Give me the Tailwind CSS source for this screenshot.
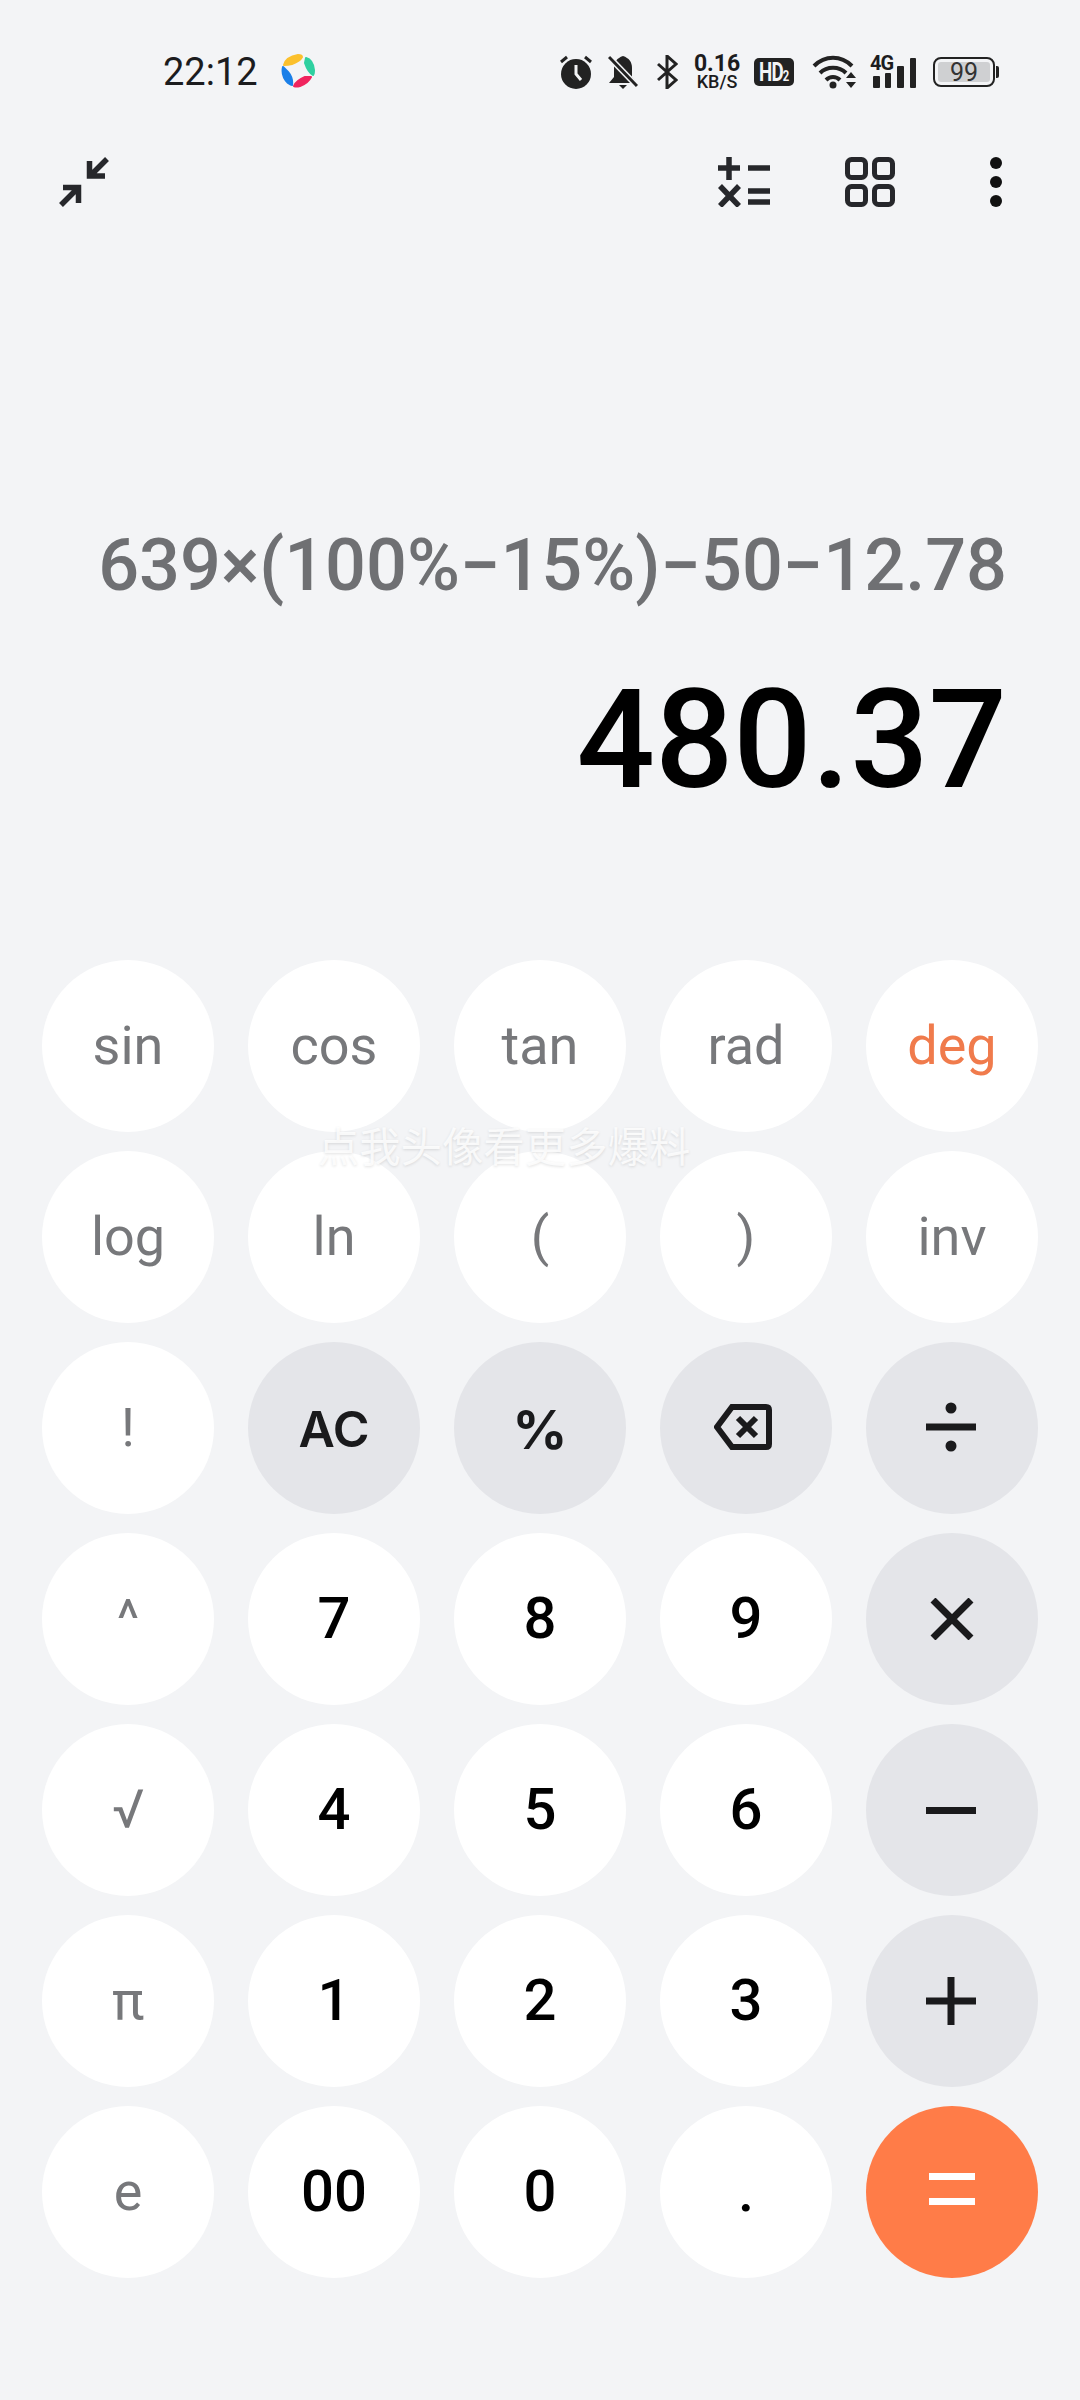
<!DOCTYPE html>
<html lang="en">
<head>
  <meta charset="UTF-8" />
  <title>Calculator</title>
  <script src="https://cdn.jsdelivr.net/npm/@tailwindcss/browser@4"></script>
</head>
<body class="bg-[#f3f4f6] font-['Roboto',sans-serif]">
<div class="relative w-[1080px] h-[2400px] overflow-hidden flex flex-col">

  <!-- status bar -->
  <div class="h-[144px] flex items-center pl-[163px] text-[#1c1c1e]">
    <span class="text-[38px] leading-none w-[117px]">22:12</span>
    <svg class="w-[36px] h-[36px]" viewBox="0 0 36 36" stroke-width="2" stroke-linejoin="round">
      <path d="M4 11Q6 3 18 1Q22 1 22 3Q20 7 12 10Q8 11 4 11Z" fill="#fbc02d" stroke="#fbc02d"/>
      <path d="M26 4Q33 6 34 16Q34 20 33 21Q28 18 25 9Z" fill="#2fd0a0" stroke="#2fd0a0"/>
      <path d="M31 23Q28 29 20 32Q16 33 14 32Q16 27 25 23Z" fill="#f0245e" stroke="#f0245e"/>
      <path d="M3 13Q1 22 8 29Q11 31 12 31Q13 24 8 18Z" fill="#1a7fe8" stroke="#1a7fe8"/>
    </svg>
    <svg class="ml-[244px] w-[32px] h-[34px]" viewBox="0 0 32 34">
      <circle cx="16" cy="19" r="15" fill="#222"/>
      <path d="M16 10V19L21 25" stroke="#f3f4f6" stroke-width="3" fill="none"/>
      <path d="M1 7L7 2M31 7L25 2" stroke="#222" stroke-width="3"/>
    </svg>
    <svg class="ml-[16px] w-[30px] h-[34px]" viewBox="0 0 30 34">
      <path d="M15 1C21 3 24 7 24 13V22L29 28H1L6 22V13C6 7 9 3 15 1Z" fill="#222"/>
      <path d="M11 30H19L15 34Z" fill="#222"/>
      <path d="M2 3L29 31" stroke="#f3f4f6" stroke-width="6"/>
      <path d="M1 2L29 31" stroke="#222" stroke-width="3"/>
    </svg>
    <svg class="ml-[19px] w-[21px] h-[34px]" viewBox="0 0 21 34" fill="none" stroke="#222" stroke-width="3">
      <path d="M1 9L19 25L10 33V1L19 9L1 25"/>
    </svg>
    <div class="ml-[17px] w-[44px] flex flex-col items-center font-medium leading-none">
      <span class="text-[23px] leading-[20px] font-bold">0.16</span>
      <span class="text-[18px] leading-[16px] whitespace-nowrap">KB/S</span>
    </div>
    <div class="ml-[15px] w-[40px] h-[28px] rounded-[5px] bg-[#222] text-[#f3f4f6] flex items-center justify-center leading-none overflow-hidden">
      <span class="scale-x-75 font-bold text-[25px] tracking-[-1px] whitespace-nowrap">HD<span class="text-[15px]">2</span></span>
    </div>
    <svg class="ml-[18px] w-[45px] h-[34px]" viewBox="0 0 45 34" fill="none" stroke="#222" stroke-width="4">
      <path d="M2 11C13 0 29 0 40 11"/>
      <path d="M8 18C15 11 27 11 34 18"/>
      <path d="M14 25C18 21 24 21 28 25"/>
      <circle cx="21" cy="30" r="3.5" fill="#222" stroke="none"/>
      <path d="M34 23L39 17L44 23ZM34 27L39 33L44 27Z" fill="#222" stroke="none"/>
    </svg>
    <div class="relative ml-[16px] w-[43px] h-[32px] flex items-end gap-[5px]">
      <div class="w-[7px] h-[12px] bg-[#222] rounded-[1px]"></div>
      <div class="w-[7px] h-[15px] bg-[#222] rounded-[1px]"></div>
      <div class="w-[7px] h-[22px] bg-[#222] rounded-[1px] ml-[1px]"></div>
      <div class="w-[7px] h-[30px] bg-[#222] rounded-[1px] ml-[1px]"></div>
      <span class="absolute left-[-3px] top-[-3px] text-[20px] leading-none font-bold tracking-[-1px]">4G</span>
    </div>
    <div class="ml-[17px] w-[62px] h-[30px] rounded-[8px] border-[2.5px] border-[#222] p-[3px] flex">
      <div class="flex-1 bg-[#cfd0d2] rounded-[3px] flex items-center justify-center text-[25px] leading-none text-[#333]">99</div>
    </div>
    <div class="ml-[1px] w-[3px] h-[12px] bg-[#222] rounded-r-[2px]"></div>
  </div>

  <!-- toolbar -->
  <div class="h-[76px] flex items-center pl-[59px] text-[#26272b]">
    <svg class="w-[50px] h-[50px]" viewBox="0 0 50 50" fill="none" stroke="#26272b" stroke-width="5.5">
      <path d="M48 2L31 19M30.500 4V19H46"/>
      <path d="M2 48L19 31M4 30.500H19.500V46"/>
    </svg>
    <svg class="ml-[609px] w-[53px] h-[50px]" viewBox="0 0 53 50" fill="none" stroke="#26272b" stroke-width="5.5">
      <path d="M0 11H22M11 0V23"/>
      <path d="M2 29L21 49M21 29L2 49"/>
      <path d="M30 11H52M30 34H52M30 45H52"/>
    </svg>
    <svg class="ml-[74px] w-[50px] h-[50px]" viewBox="0 0 50 50" fill="none" stroke="#26272b" stroke-width="5">
      <rect x="2.500" y="2.500" width="18" height="18" rx="4"/>
      <rect x="29.500" y="2.500" width="18" height="18" rx="4"/>
      <rect x="2.500" y="29.500" width="18" height="18" rx="4"/>
      <rect x="29.500" y="29.500" width="18" height="18" rx="4"/>
    </svg>
    <svg class="ml-[94px] w-[14px] h-[52px]" viewBox="0 0 14 52" fill="#111">
      <circle cx="7" cy="7" r="6"/>
      <circle cx="7" cy="26" r="6"/>
      <circle cx="7" cy="45" r="6"/>
    </svg>
  </div>

  <!-- display -->
  <div class="h-[740px] flex flex-col items-end pr-[73px] pt-[304px]">
    <div class="text-[72px] leading-[84px] font-medium text-[#6f7073] whitespace-nowrap">639×(100%−15%)−50−12.78</div>
    <div class="mt-[57px] text-[138px] leading-[150px] font-medium text-black whitespace-nowrap">480.37</div>
  </div>

  <!-- keypad -->
  <div class="grid grid-cols-[repeat(5,172px)] auto-rows-[172px] gap-x-[34px] gap-y-[19px] pl-[42px] text-[54px] text-[#77787b] [&>button:not(.flex)]:pb-[2px]">
    <button class="rounded-full bg-white">sin</button>
    <button class="rounded-full bg-white">cos</button>
    <button class="rounded-full bg-white">tan</button>
    <button class="rounded-full bg-white">rad</button>
    <button class="rounded-full bg-white text-[#f07b4c]">deg</button>

    <button class="rounded-full bg-white">log</button>
    <button class="rounded-full bg-white">ln</button>
    <button class="rounded-full bg-white">(</button>
    <button class="rounded-full bg-white">)</button>
    <button class="rounded-full bg-white">inv</button>

    <button class="rounded-full bg-white">!</button>
    <button class="rounded-full bg-[#e4e5e9] pt-[4px] text-[#1a1a1c] text-[50px] font-semibold font-['Inter',sans-serif]">AC</button>
    <button class="rounded-full bg-[#e4e5e9] pt-[4px] text-[#1a1a1c] text-[54px] font-bold font-['Inter',sans-serif]">%</button>
    <button class="rounded-full bg-[#e4e5e9] flex items-center justify-center">
      <svg class="w-[58px] h-[46px] mr-[7px] mb-[2px]" viewBox="0 0 58 46" fill="none" stroke="#1a1a1c" stroke-width="6">
        <path d="M18 3H52Q55 3 55 6V40Q55 43 52 43H18L3 23Z"/>
        <path d="M24 14L42 32M42 14L24 32"/>
      </svg>
    </button>
    <button class="rounded-full bg-[#e4e5e9] flex items-center justify-center">
      <svg class="w-[50px] h-[50px] mb-[3px] mr-[2px]" viewBox="0 0 50 50" fill="#1a1a1c">
        <circle cx="25" cy="6" r="5.500"/>
        <rect x="0" y="21.500" width="50" height="7"/>
        <circle cx="25" cy="44" r="5.500"/>
      </svg>
    </button>

    <button class="rounded-full bg-white">^</button>
    <button class="rounded-full bg-white text-[58px] font-medium text-black">7</button>
    <button class="rounded-full bg-white text-[58px] font-medium text-black">8</button>
    <button class="rounded-full bg-white text-[58px] font-medium text-black">9</button>
    <button class="rounded-full bg-[#e4e5e9] flex items-center justify-center">
      <svg class="w-[44px] h-[42px]" viewBox="0 0 44 42" fill="none" stroke="#1a1a1c" stroke-width="7">
        <path d="M3 2L41 40M41 2L3 40"/>
      </svg>
    </button>

    <button class="rounded-full bg-white">√</button>
    <button class="rounded-full bg-white text-[58px] font-medium text-black">4</button>
    <button class="rounded-full bg-white text-[58px] font-medium text-black">5</button>
    <button class="rounded-full bg-white text-[58px] font-medium text-black">6</button>
    <button class="rounded-full bg-[#e4e5e9] flex items-center justify-center">
      <div class="w-[50px] h-[7px] bg-[#1a1a1c] mr-[2px]"></div>
    </button>

    <button class="rounded-full bg-white">π</button>
    <button class="rounded-full bg-white text-[58px] font-medium text-black">1</button>
    <button class="rounded-full bg-white text-[58px] font-medium text-black">2</button>
    <button class="rounded-full bg-white text-[58px] font-medium text-black">3</button>
    <button class="rounded-full bg-[#e4e5e9] flex items-center justify-center">
      <svg class="w-[50px] h-[48px] mr-[2px]" viewBox="0 0 50 48" fill="#1a1a1c">
        <rect x="0" y="20.500" width="50" height="7"/>
        <rect x="21.500" y="0" width="7" height="48"/>
      </svg>
    </button>

    <button class="rounded-full bg-white">e</button>
    <button class="rounded-full bg-white text-[58px] font-medium text-black">00</button>
    <button class="rounded-full bg-white text-[58px] font-medium text-black">0</button>
    <button class="rounded-full bg-white text-[58px] font-medium text-black">.</button>
    <button class="rounded-full bg-[#ff7c48] flex items-center justify-center">
      <div class="w-[46px] h-[32px] border-y-[7px] border-white mb-[6px]"></div>
    </button>
  </div>

  <!-- watermark over the keypad -->
  <div class="absolute left-[318px] top-[1117px] text-[41px] leading-[54px] tracking-[0.4px] whitespace-nowrap text-white/80 font-['Noto_Sans_CJK_SC',sans-serif] [text-shadow:0_1px_3px_rgba(0,0,0,0.12)]">点我头像看更多爆料</div>
</div>
</body>
</html>
